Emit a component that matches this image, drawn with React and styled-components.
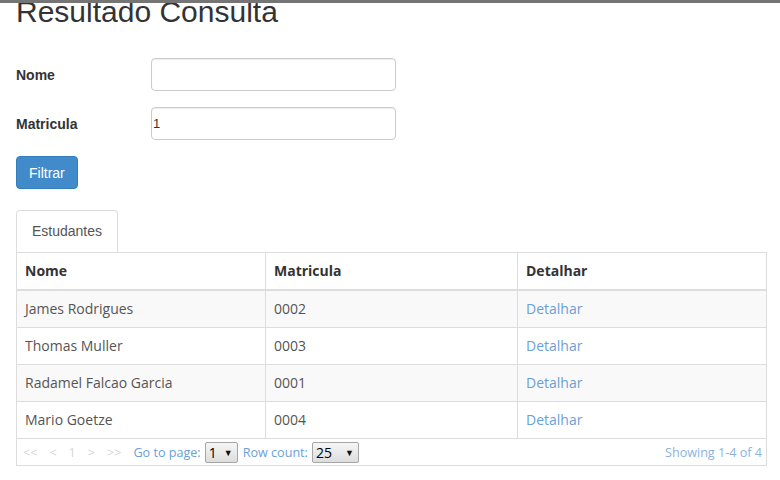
import React from 'react';
import styled, { createGlobalStyle } from 'styled-components';

const GlobalStyle = createGlobalStyle`
  body {
    margin: 0;
    background: #fff;
    color: #333;
    font-family: "Liberation Sans", Arial, sans-serif;
    font-size: 14px;
    overflow: hidden;
  }
`

const TopBar = styled.div`
  height: 3px;
  background: #757575;
  position: relative;
  z-index: 2;
`

const Page = styled.div`
  padding: 0 14px 0 16px;
`

const Title = styled.h1`
  margin: -8px 0 30px;
  font-size: 30px;
  font-weight: 400;
  line-height: 33px;
  color: #333;
`

const Form = styled.form`
  display: grid;
  grid-template-columns: 135px 245px;
  row-gap: 16px;
  align-items: center;
`

const Label = styled.label`
  font-weight: bold;
  font-size: 14px;
  color: #333;
`

const Input = styled.input`
  box-sizing: border-box;
  height: 33px;
  width: 245px;
  padding: 0 1px;
  border: 1px solid #ccc;
  border-radius: 4px;
  box-shadow: inset 0 1px 1px rgba(0, 0, 0, 0.075);
  font-family: "Liberation Sans", Arial, sans-serif;
  font-size: 13px;
  color: #333;
  outline: none;
`

const Button = styled.button`
  grid-column: 1 / 2;
  justify-self: start;
  box-sizing: border-box;
  height: 33px;
  padding: 0 12px;
  border: 1px solid #357ebd;
  border-radius: 4px;
  background: #428bca;
  color: #fff;
  font-family: "Liberation Sans", Arial, sans-serif;
  font-size: 14px;
`

const Tabs = styled.ul`
  display: flex;
  list-style: none;
  margin: 21px 0 0;
  padding: 0;
`

const Tab = styled.li`
  box-sizing: border-box;
  height: 42px;
  padding: 10px 15px;
  line-height: 20px;
  border: 1px solid #ddd;
  border-bottom: none;
  border-radius: 4px 4px 0 0;
  color: #555;
  font-size: 14px;
`

const Table = styled.table`
  width: 750px;
  border-collapse: collapse;
  table-layout: fixed;
  font-family: "Open Sans", sans-serif;
  font-size: 14px;
`

const Th = styled.th`
  text-align: left;
  padding: 8px;
  line-height: 20px;
  border: 1px solid #ddd;
  border-bottom: 2px solid #ddd;
  color: #333;
  font-weight: 700;
`

const Row = styled.tr`
  background: ${p => (p.$striped ? '#f9f9f9' : '#fff')};
`

const Td = styled.td`
  padding: 8px;
  line-height: 20px;
  border: 1px solid #ddd;
  color: #555;
`

const Link = styled.a`
  color: #6b9fd6;
  text-decoration: none;
`

const FooterCell = styled.td`
  padding: 2px 4px 2px 6px;
  border: 1px solid #ddd;
  font-size: 12.6px;
`

const Footer = styled.div`
  display: flex;
  align-items: center;
  justify-content: space-between;
  height: 22px;
`

const Pager = styled.div`
  display: flex;
  align-items: center;
`

const PageNav = styled.span`
  color: #d6d6d6;
  margin-right: 12px;
`

const PagerLabel = styled.span`
  color: #6b9fd6;
  margin-right: 4px;
`

const SelectBox = styled.span`
  box-sizing: border-box;
  display: inline-flex;
  align-items: center;
  justify-content: space-between;
  width: ${p => p.$width}px;
  height: 21px;
  padding: 0 4px 0 3px;
  margin-right: 5px;
  border: 1px solid #a6a6a6;
  border-radius: 2px;
  background: linear-gradient(#f6f6f6, #dddddd);
  color: #000;
  font-size: 14px;
`

const Arrow = styled.span`
  font-size: 9px;
  color: #111;
`

const Showing = styled.span`
  color: #8db2dc;
`

const students = [
  { nome: 'James Rodrigues', matricula: '0002' },
  { nome: 'Thomas Muller', matricula: '0003' },
  { nome: 'Radamel Falcao Garcia', matricula: '0001' },
  { nome: 'Mario Goetze', matricula: '0004' },
];

export default function App() {
  return (
    <>
      <GlobalStyle />
      <TopBar />
      <Page>
        <Title>Resultado Consulta</Title>
        <Form onSubmit={e => e.preventDefault()}>
          <Label>Nome</Label>
          <Input type="text" defaultValue="" />
          <Label>Matricula</Label>
          <Input type="text" defaultValue="1" />
          <Button type="submit">Filtrar</Button>
        </Form>
        <Tabs>
          <Tab>Estudantes</Tab>
        </Tabs>
        <Table>
          <colgroup>
            <col style={{ width: 249 }} />
            <col style={{ width: 252 }} />
            <col style={{ width: 249 }} />
          </colgroup>
          <thead>
            <tr>
              <Th>Nome</Th>
              <Th>Matricula</Th>
              <Th>Detalhar</Th>
            </tr>
          </thead>
          <tbody>
            {students.map((s, i) => (
              <Row key={s.matricula} $striped={i % 2 === 0}>
                <Td>{s.nome}</Td>
                <Td>{s.matricula}</Td>
                <Td><Link href="#">Detalhar</Link></Td>
              </Row>
            ))}
          </tbody>
          <tfoot>
            <tr>
              <FooterCell colSpan={3}>
                <Footer>
                  <Pager>
                    <PageNav>&lt;&lt;</PageNav>
                    <PageNav>&lt;</PageNav>
                    <PageNav>1</PageNav>
                    <PageNav>&gt;</PageNav>
                    <PageNav>&gt;&gt;</PageNav>
                    <PagerLabel>Go to page:</PagerLabel>
                    <SelectBox $width={33}>1<Arrow>▼</Arrow></SelectBox>
                    <PagerLabel>Row count:</PagerLabel>
                    <SelectBox $width={47}>25<Arrow>▼</Arrow></SelectBox>
                  </Pager>
                  <Showing>Showing 1-4 of 4</Showing>
                </Footer>
              </FooterCell>
            </tr>
          </tfoot>
        </Table>
      </Page>
    </>
  );
}
